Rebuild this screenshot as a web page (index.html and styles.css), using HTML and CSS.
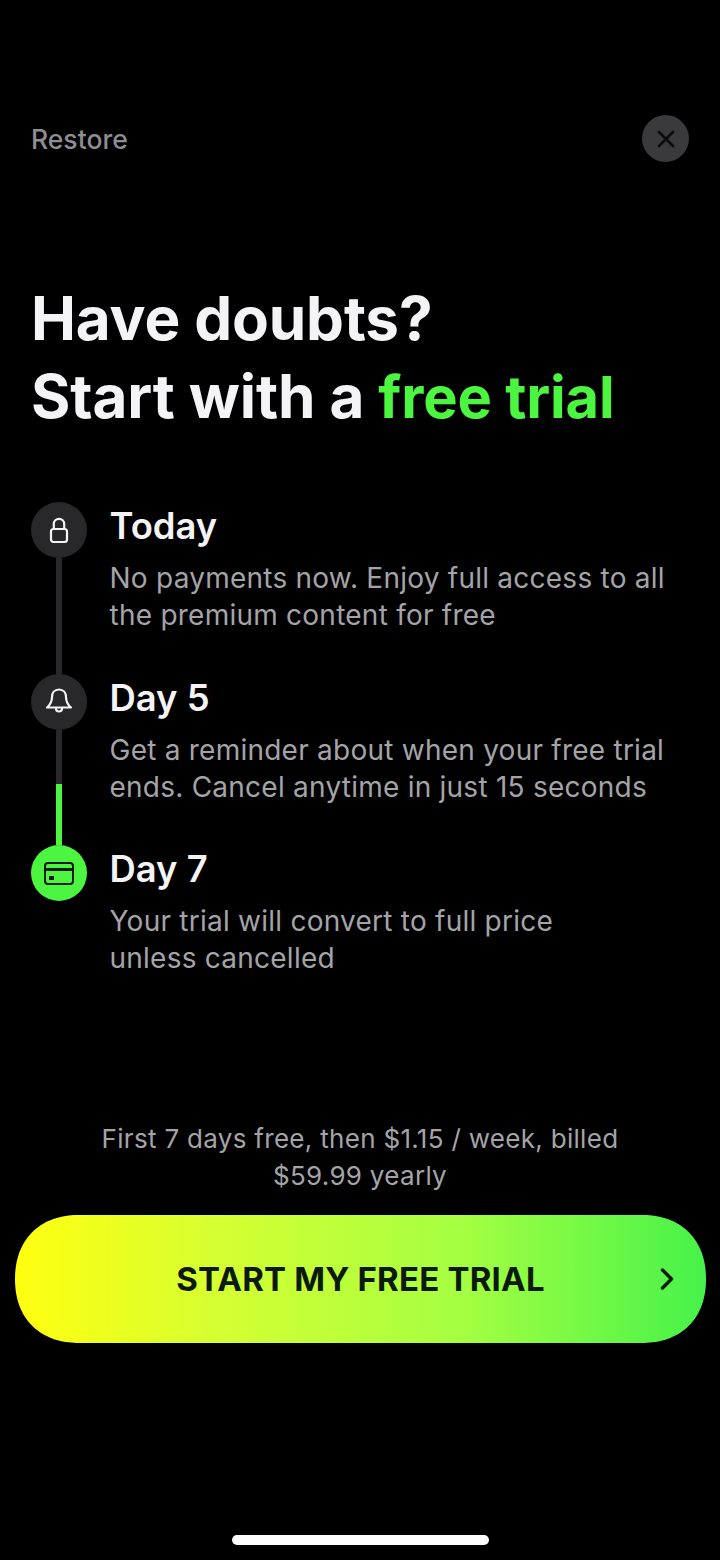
FILE: index.html
```html
<!DOCTYPE html>
<html lang="en">
<head>
  <meta charset="utf-8" />
  <meta name="viewport" content="width=device-width, initial-scale=1"/>
  <title>Free trial</title>
  <link rel="stylesheet" href="styles.css">
</head>
<body>
  <main class="page">
    <header class="topbar">
      <span class="restore">Restore</span>
      <span class="close">
        <svg width="20" height="20" viewBox="0 0 20 20" fill="none" stroke="#0b0b0b" stroke-width="2.6" stroke-linecap="round"><path d="M3 3l14 14M17 3L3 17"/></svg>
      </span>
    </header>

    <h1 class="headline">Have doubts?<br>Start with a <em>free trial</em></h1>

    <ol class="steps">
      <li class="step">
        <div class="rail">
          <span class="dot">
            <svg width="20" height="27" viewBox="0 0 20 27" fill="none" stroke="#f4f4f6" stroke-width="2.2" stroke-linejoin="round"><rect x="2" y="12" width="16" height="13" rx="2.500"/><path d="M4.800 12V7a5.200 5.200 0 0 1 10.400 0v5"/></svg>
          </span>
          <span class="line"></span>
        </div>
        <div class="step-text">
          <h2>Today</h2>
          <p>No payments now. Enjoy full access to all<br>the premium content for free</p>
        </div>
      </li>
      <li class="step">
        <div class="rail">
          <span class="dot">
            <svg width="28" height="30" viewBox="0 0 28 30" fill="none" stroke="#f4f4f6" stroke-width="2.2" stroke-linejoin="round" stroke-linecap="round"><path d="M14 2.500c-4.500 0-7 3.500-7 7.500 0 5-2 8-5 10.500h24c-3-2.500-5-5.500-5-10.500 0-4-2.500-7.500-7-7.500z"/><path d="M11 21.500a3 3 0 0 0 6 0"/></svg>
          </span>
          <span class="line line-split"></span>
        </div>
        <div class="step-text">
          <h2>Day 5</h2>
          <p>Get a reminder about when your free trial<br>ends. Cancel anytime in just 15 seconds</p>
        </div>
      </li>
      <li class="step">
        <div class="rail">
          <span class="dot dot-active">
            <svg width="30" height="23" viewBox="0 0 30 23" fill="none" stroke="#0b1a0b" stroke-width="2"><rect x="1" y="1" width="28" height="21" rx="3"/><path d="M1 7.500h28" stroke-width="3"/><rect x="5" y="14" width="5" height="4" fill="#0b1a0b" stroke="none"/></svg>
          </span>
        </div>
        <div class="step-text">
          <h2>Day 7</h2>
          <p>Your trial will convert to full price<br>unless cancelled</p>
        </div>
      </li>
    </ol>

    <p class="billing">First 7 days free, then $1.15 / week, billed<br>$59.99 yearly</p>

    <button class="cta">
      <span>START MY FREE TRIAL</span>
      <svg class="cta-arrow" width="14" height="24" viewBox="0 0 14 24" fill="none" stroke="#0b1a0b" stroke-width="3.400" stroke-linecap="round" stroke-linejoin="round"><path d="M2.500 3l9 9-9 9"/></svg>
    </button>

    <div class="home-bar"></div>
  </main>
</body>
</html>
```

FILE: styles.css
```css
* {
  box-sizing: border-box;
}

body {
  background-color: #000;
  color: #f4f4f6;
  font-family: Inter, "Liberation Sans", sans-serif;
  margin: 0;
}

.page {
  display: flex;
  flex-direction: column;
  height: 1560px;
  padding: 115px 0 15px;
}

.topbar {
  align-items: center;
  display: flex;
  height: 47px;
  justify-content: space-between;
  padding: 0 31px 0 31px;
}

.restore {
  color: #8e8e93;
  font-size: 26.500px;
  font-weight: 500;
}

.close {
  align-items: center;
  background-color: #3a3a3c;
  border-radius: 50%;
  display: flex;
  height: 47px;
  justify-content: center;
  width: 47px;
}

.headline {
  font-size: 60.200px;
  font-weight: 700;
  letter-spacing: -0.15px;
  line-height: 78px;
  margin: 118px 0 0;
  padding-left: 31px;
}

.headline em {
  color: #4cf53f;
  font-size: 57.800px;
  font-style: normal;
}

.steps {
  list-style: none;
  margin: 66px 0 0;
  padding: 0 0 0 31px;
}

.step {
  display: flex;
  gap: 22.500px;
  height: 171.500px;
}

.step:last-child {
  height: 257px;
}

.rail {
  align-items: center;
  display: flex;
  flex-direction: column;
  width: 56px;
}

.dot {
  align-items: center;
  background-color: #28282a;
  border-radius: 50%;
  display: flex;
  flex: none;
  height: 56px;
  justify-content: center;
  width: 56px;
}

.dot-active {
  background-color: #4cf53f;
}

.line {
  background-color: #28282a;
  flex: 1;
  width: 6px;
}

.line-split {
  background: linear-gradient(#28282a 47%, #4cf53f 47%);
}

.step-text {
  padding-top: 1px;
}

.step-text h2 {
  font-size: 36.400px;
  font-weight: 600;
  line-height: 46px;
  margin: 0;
}

.step-text p {
  color: #a4a4a8;
  font-size: 28px;
  letter-spacing: 0.24px;
  line-height: 37px;
  margin: 11px 0 0;
}

.billing {
  color: #a4a4a8;
  font-size: 26px;
  letter-spacing: 0.3px;
  line-height: 37px;
  margin: 18px 0 0;
  text-align: center;
}

.cta {
  align-items: center;
  background: linear-gradient(90deg, #ffff10 0%, #d4ff32 30%, #a4ff42 65%, #46f24a 100%);
  border: 0;
  border-radius: 64px;
  color: #0b1a0b;
  corner-shape: superellipse(1.15);
  display: flex;
  font-family: inherit;
  font-size: 33px;
  font-weight: 700;
  height: 128px;
  justify-content: center;
  letter-spacing: 0.2px;
  margin: 21px 14px 0 15px;
  position: relative;
}

.cta-arrow {
  position: absolute;
  right: 32px;
}

.home-bar {
  align-self: center;
  background-color: #fff;
  border-radius: 5px;
  height: 10px;
  margin-top: auto;
  width: 257px;
}
```
